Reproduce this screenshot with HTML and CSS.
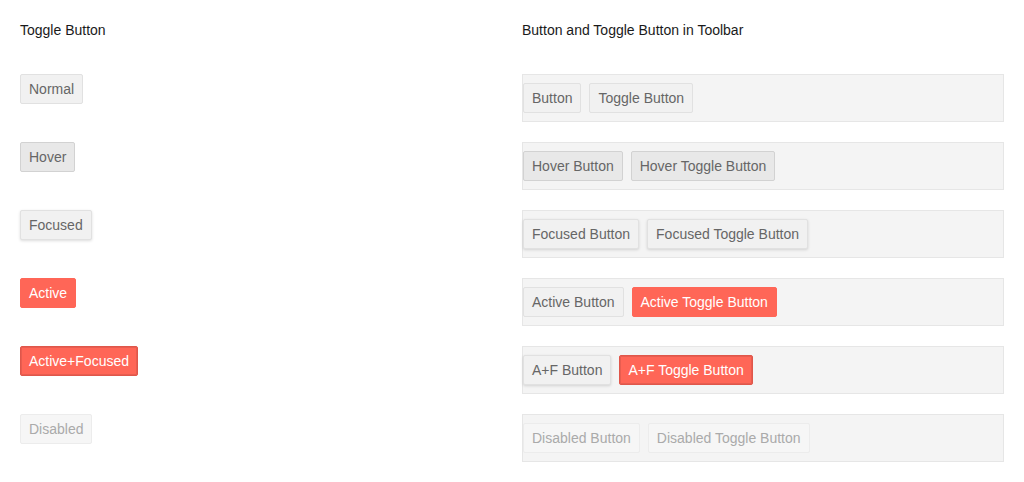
FILE: index.html
```html
<!DOCTYPE html>
<html>
<head>
<meta charset="utf-8">
<link rel="stylesheet" href="styles.css">
</head>
<body>
<div class="page">
  <div class="heading">Toggle Button</div>
  <div class="heading">Button and Toggle Button in Toolbar</div>

  <div class="cell"><span class="btn">Normal</span></div>
  <div class="toolbar"><span class="btn">Button</span><span class="btn">Toggle Button</span></div>

  <div class="cell"><span class="btn hover">Hover</span></div>
  <div class="toolbar"><span class="btn hover">Hover Button</span><span class="btn hover">Hover Toggle Button</span></div>

  <div class="cell"><span class="btn focused">Focused</span></div>
  <div class="toolbar"><span class="btn focused">Focused Button</span><span class="btn focused">Focused Toggle Button</span></div>

  <div class="cell"><span class="btn active">Active</span></div>
  <div class="toolbar"><span class="btn pressed">Active Button</span><span class="btn active">Active Toggle Button</span></div>

  <div class="cell"><span class="btn active focused-active">Active+Focused</span></div>
  <div class="toolbar"><span class="btn pressed focused">A+F Button</span><span class="btn active focused-active">A+F Toggle Button</span></div>

  <div class="cell"><span class="btn disabled">Disabled</span></div>
  <div class="toolbar"><span class="btn disabled">Disabled Button</span><span class="btn disabled">Disabled Toggle Button</span></div>
</div>
</body>
</html>
```
FILE: styles.css
```css
html, body {
  margin: 0;
  padding: 0;
  background: #ffffff;
}
body {
  font-family: "Liberation Sans", Arial, sans-serif;
  font-size: 14px;
  color: #222;
}
.page {
  display: grid;
  grid-template-columns: 502px 482px;
  row-gap: 20px;
  padding: 20px;
  align-items: start;
}
.heading {
  line-height: 20px;
  height: 20px;
  margin-bottom: 14px;
  color: #1a1a1a;
}
.cell {
  height: 48px;
  display: flex;
  align-items: flex-start;
}
.toolbar {
  height: 48px;
  box-sizing: border-box;
  background: #f4f4f4;
  border: 1px solid #e6e6e6;
  padding: 8px 0;
  display: flex;
  gap: 8px;
  align-items: flex-start;
}
.btn {
  display: inline-block;
  box-sizing: border-box;
  height: 30px;
  line-height: 28px;
  padding: 0 8px;
  border: 1px solid #e1e1e1;
  border-radius: 2px;
  background: #f1f1f1;
  color: #666;
  white-space: nowrap;
}
.btn.hover {
  background: #e8e8e8;
  border-color: #d2d2d2;
}
.btn.focused {
  box-shadow: 0 1px 3px rgba(0, 0, 0, 0.14);
}
.btn.pressed {
  background: #f1f1f1;
  border-color: #e1e1e1;
}
.btn.active {
  background: #ff6657;
  border-color: #ff6657;
  color: #fff;
}
.btn.focused-active {
  border-color: #e0564a;
  box-shadow: inset 0 0 0 1px #e85d50;
}
.btn.disabled {
  background: #f6f6f6;
  border-color: #ececec;
  color: #aaa;
}
```
